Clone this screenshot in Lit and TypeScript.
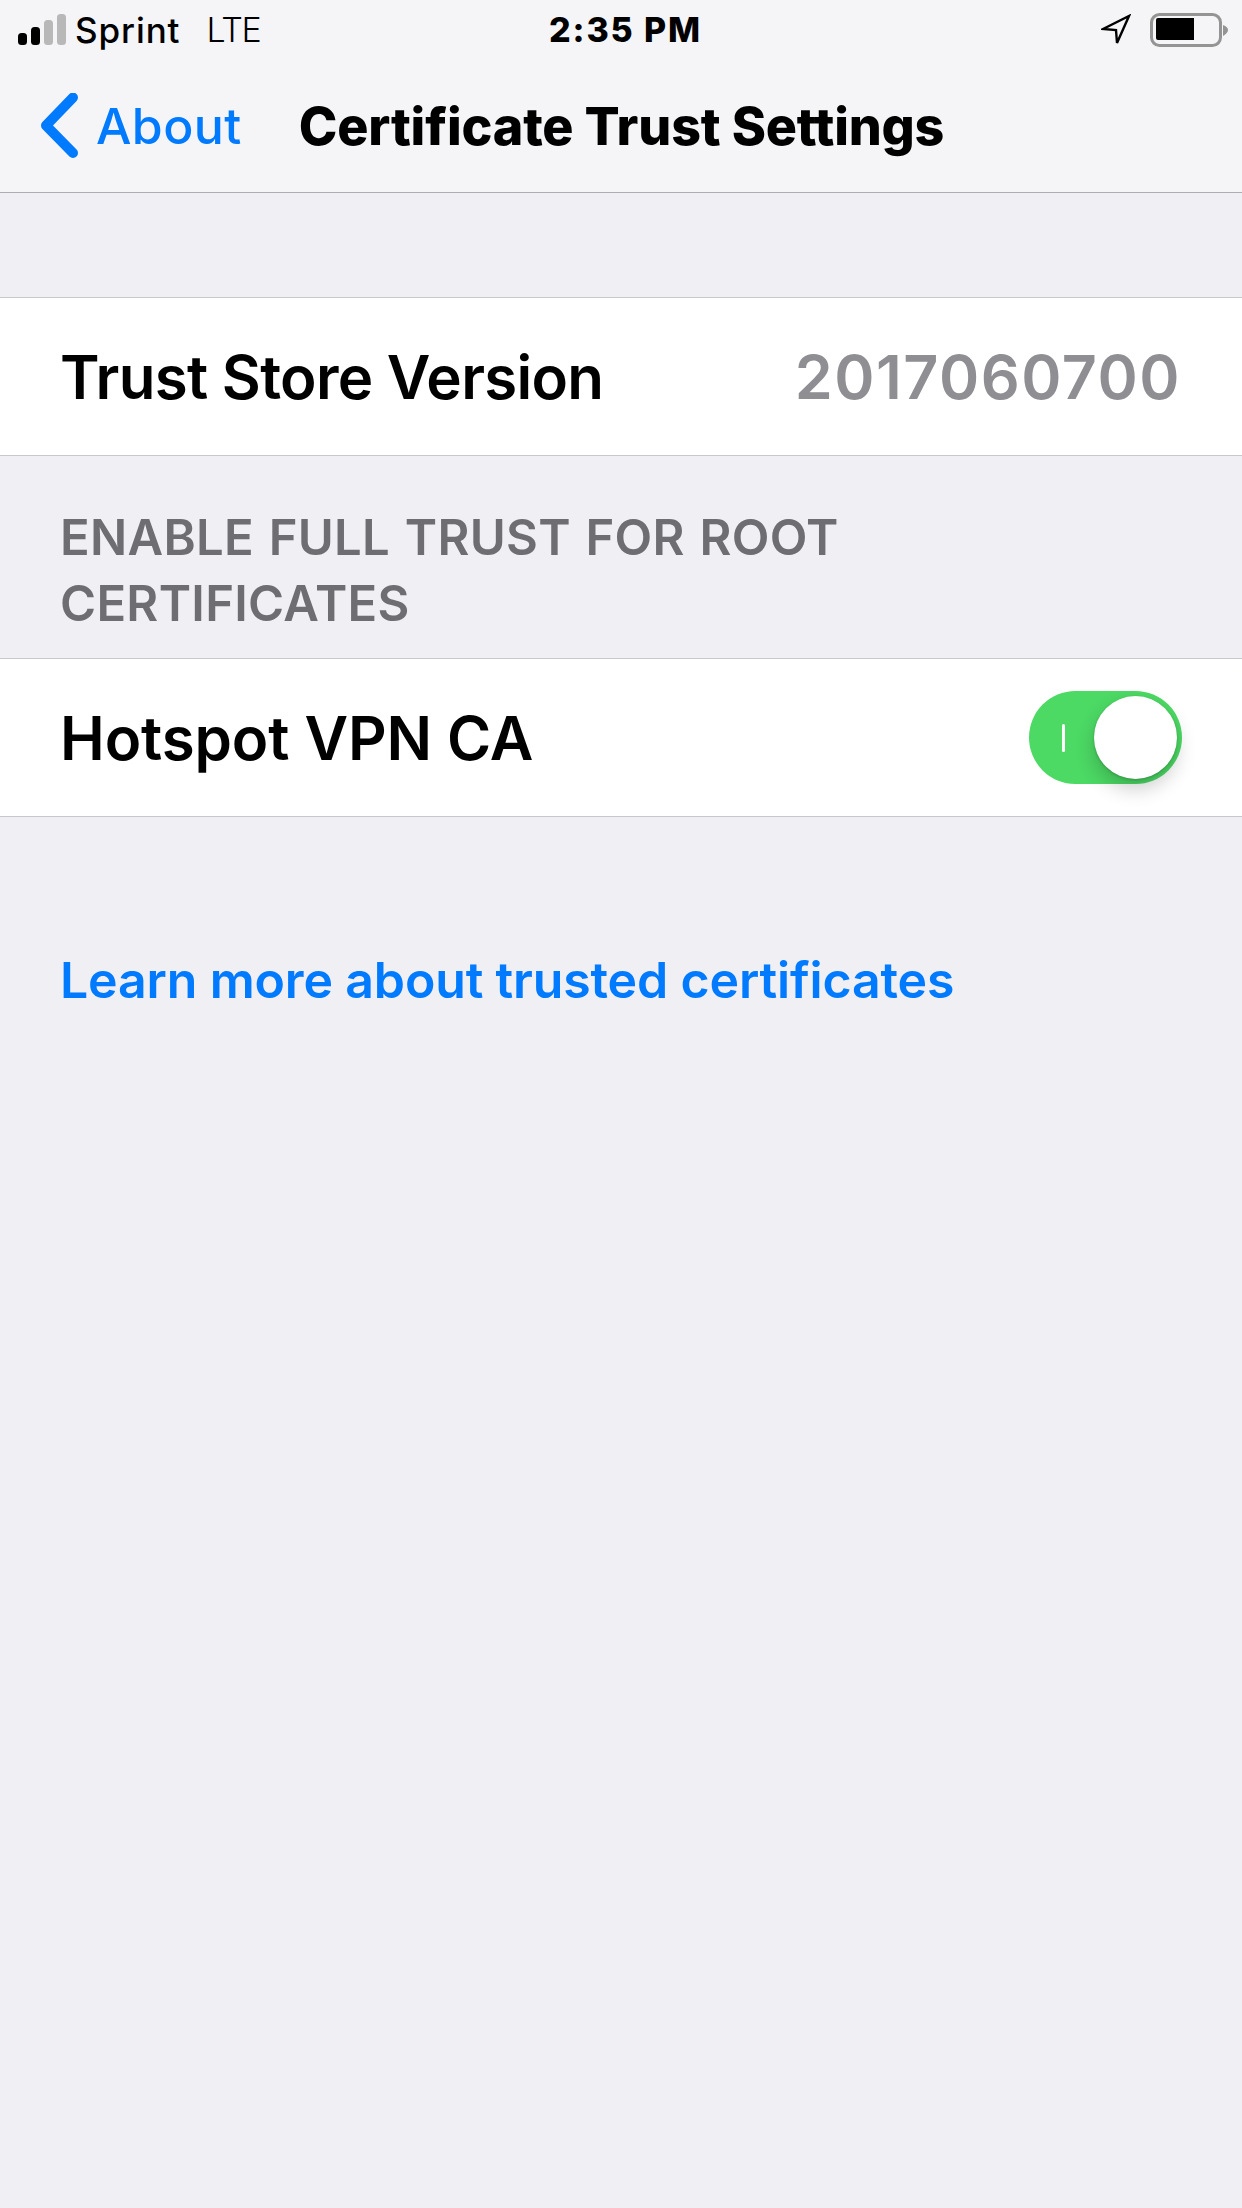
import { LitElement, html, css } from "lit";
import { customElement } from "lit/decorators.js";

@customElement("app-root")
export class AppRoot extends LitElement {
  static styles = css`
    :host {
      display: block;
      width: 1242px;
      height: 2208px;
      background: #efeff4;
      font-family: Inter, "Liberation Sans", sans-serif;
      color: #000;
      overflow: hidden;
    }
    .top {
      height: 192px;
      background: #f5f5f8;
      border-bottom: 1px solid #aeaeb2;
      box-sizing: content-box;
      display: flex;
      flex-direction: column;
    }
    .status {
      height: 60px;
      display: flex;
      align-items: center;
      padding: 0 14px 0 18px;
      position: relative;
    }
    .carrier { font-size: 35px; font-weight: 500; margin-left: 9px; line-height: 60px; letter-spacing: 0.9px; }
    .lte { font-size: 34px; font-weight: 300; margin-left: 26px; line-height: 60px; letter-spacing: -1.2px; }
    .time {
      position: absolute;
      left: 9px; right: 0;
      text-align: center;
      font-size: 34px;
      font-weight: 800;
      line-height: 62px;
      letter-spacing: 1.9px;
    }
    .right { margin-left: auto; display: flex; align-items: center; gap: 19px; }
    .nav { flex: 1; display: flex; align-items: center; padding: 0 0 0 39px; }
    .back { margin-right: 17px; display: block; }
    .about { color: #007aff; font-size: 50px; font-weight: 500; letter-spacing: 0.4px; }
    .title { font-size: 52px; font-weight: 800; margin-left: 57px; letter-spacing: -0.18px; white-space: nowrap; }
    .row {
      background: #fff;
      border-top: 1px solid #c8c7cc;
      border-bottom: 1px solid #c8c7cc;
      display: flex;
      align-items: center;
      justify-content: space-between;
      padding: 0 60px;
      box-sizing: content-box;
      height: 157px;
      font-size: 60px;
      font-weight: 600;
    }
    .first { margin-top: 104px; }
    .name-a { letter-spacing: -0.7px; }
    .name-b { letter-spacing: -0.1px; }
    .value { color: #8e8e93; font-size: 61px; letter-spacing: 1.5px; margin-right: 1px; font-weight: 600; }
    .header {
      padding: 49px 60px 21px;
      font-size: 49px;
      line-height: 66px;
      font-weight: 600;
      color: #6d6d72;
      letter-spacing: 0.3px;
      word-spacing: 2px;
    }
    .switch {
      position: relative;
      width: 153px;
      height: 93px;
      border-radius: 47px;
      background: #4cd964;
    }
    .bar {
      position: absolute;
      left: 33px;
      top: 33px;
      width: 3px;
      height: 28px;
      background: #fff;
      border-radius: 2px;
    }
    .knob {
      position: absolute;
      right: 5px;
      top: 5px;
      width: 83px;
      height: 83px;
      border-radius: 50%;
      background: #fff;
      box-shadow: 0 10px 20px rgba(0, 0, 0, 0.2), 0 1px 3px rgba(0, 0, 0, 0.2);
    }
    .link {
      color: #007aff;
      font-size: 50px;
      font-weight: 600;
      margin: 130px 0 0 60px;
      line-height: 66px;
      letter-spacing: -0.15px;
    }
  `;

  render() {
    return html`
      <div class="top">
        <div class="status">
          <svg width="48" height="32" viewBox="0 0 48 32">
            <rect x="0" y="19" width="9" height="12" rx="3.5" fill="#000" />
            <rect x="13" y="13" width="9" height="18" rx="3.5" fill="#000" />
            <rect x="26" y="6" width="9" height="25" rx="3.5" fill="#b8b8b8" />
            <rect x="39" y="0" width="9" height="31" rx="3.5" fill="#b8b8b8" />
          </svg>
          <span class="carrier">Sprint</span>
          <span class="lte">LTE</span>
          <span class="time">2:35 PM</span>
          <span class="right">
            <svg width="30" height="32" viewBox="0 0 30 32">
              <path d="M2 15 L28 2 L16 29 L15 16 Z" fill="none" stroke="#000" stroke-width="2.4" stroke-linejoin="miter" />
            </svg>
            <svg width="78" height="34" viewBox="0 0 78 34">
              <rect x="1.5" y="1.5" width="69" height="31" rx="8" fill="none" stroke="#949494" stroke-width="3" />
              <path d="M6 7 a2 2 0 0 1 2 -2 H44 V27 H8 a2 2 0 0 1 -2 -2 Z" fill="#000" />
              <path d="M73 12 Q78 14 78 17 Q78 20 73 23 Z" fill="#949494" />
            </svg>
          </span>
        </div>
        <div class="nav">
          <svg class="back" width="40" height="66" viewBox="0 0 40 66">
            <path d="M34 4.5 L7 32.5 L34 60" fill="none" stroke="#007aff" stroke-width="10" stroke-linecap="round" stroke-linejoin="round" />
          </svg>
          <span class="about">About</span>
          <span class="title">Certificate Trust Settings</span>
        </div>
      </div>
      <div class="row first">
        <span class="name-a">Trust Store Version</span>
        <span class="value">2017060700</span>
      </div>
      <div class="header">ENABLE FULL TRUST FOR ROOT<br />CERTIFICATES</div>
      <div class="row">
        <span class="name-b">Hotspot VPN CA</span>
        <div class="switch"><span class="bar"></span><span class="knob"></span></div>
      </div>
      <div class="link">Learn more about trusted certificates</div>
    `;
  }
}
